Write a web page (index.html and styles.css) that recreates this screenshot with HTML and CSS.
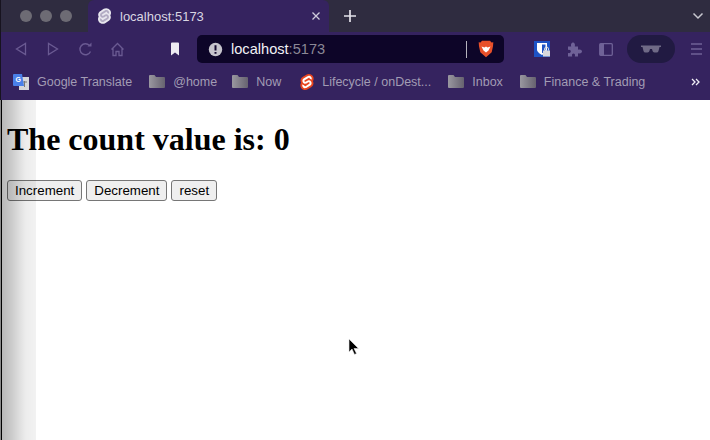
FILE: index.html
```html
<!DOCTYPE html>
<html lang="en">
<head>
  <meta charset="UTF-8" />
  <title>localhost:5173</title>
  <link rel="stylesheet" href="styles.css">
</head>
<body>
  <svg class="defs" width="0" height="0">
    <defs>
      <linearGradient id="folder-fill" x1="0" y1="0" x2="1" y2="0">
        <stop offset="0" stop-color="#9a98a0"/>
        <stop offset="1" stop-color="#66626f"/>
      </linearGradient>
      <path id="folder" d="M1 0h4.500l1.500 2h8q1 0 1 1v9q0 1-1 1H1q-1 0-1-1V1q0-1 1-1z" fill="url(#folder-fill)"/>
      <path id="svelte-base" d="M91.800 15.600C80.900-.1 59.200-4.700 43.600 5.200L16.100 22.800C8.600 27.500 3.400 35.200 1.900 43.900c-1.300 7.300-.2 14.800 3.300 21.300-2.400 3.600-4 7.600-4.700 11.800-1.600 8.900.5 18.100 5.700 25.400 11 15.700 32.600 20.300 48.200 10.400l27.500-17.500c7.500-4.700 12.700-12.400 14.200-21.100 1.300-7.300.2-14.800-3.300-21.300 2.400-3.600 4-7.600 4.700-11.800 1.700-9-.4-18.200-5.700-25.500"/>
      <path id="svelte-s" d="M40.900 103.900c-8.900 2.300-18.200-1.200-23.400-8.700-3.200-4.400-4.400-9.900-3.500-15.300.2-.9.4-1.700.6-2.600l.5-1.600 1.400 1c3.300 2.400 6.900 4.200 10.800 5.400l1 .3-.1 1c-.1 1.400.3 2.900 1.100 4.100 1.600 2.300 4.400 3.400 7.100 2.700.6-.2 1.200-.4 1.700-.7L65.500 72c1.400-.9 2.300-2.200 2.600-3.800.3-1.600-.1-3.300-1-4.600-1.600-2.300-4.400-3.300-7.100-2.600-.6.2-1.200.4-1.700.7l-10.500 6.700c-1.700 1.100-3.600 1.900-5.600 2.400-8.900 2.300-18.200-1.200-23.400-8.700-3.100-4.400-4.400-9.900-3.400-15.300.9-5.200 4.100-9.900 8.600-12.700l27.500-17.500c1.700-1.100 3.600-1.900 5.600-2.500 8.900-2.300 18.200 1.200 23.400 8.700 3.200 4.400 4.400 9.900 3.500 15.300-.2.900-.4 1.700-.7 2.600l-.5 1.600-1.400-1c-3.300-2.400-6.900-4.200-10.800-5.400l-1-.3.1-1c.1-1.400-.3-2.900-1.100-4.100-1.600-2.300-4.400-3.300-7.100-2.600-.6.2-1.200.4-1.700.7L32.400 46.100c-1.400.9-2.300 2.200-2.600 3.800s.1 3.300 1 4.600c1.600 2.300 4.400 3.300 7.100 2.600.6-.2 1.200-.4 1.700-.7l10.500-6.700c1.700-1.100 3.600-1.900 5.600-2.500 8.900-2.300 18.200 1.200 23.400 8.700 3.200 4.400 4.400 9.900 3.500 15.300-.9 5.200-4.100 9.900-8.600 12.700l-27.500 17.500c-1.700 1.100-3.600 1.900-5.600 2.500"/>
    </defs>
  </svg>

  <div class="browser">
    <div class="tabbar">
      <div class="lights"><span></span><span></span><span></span></div>
      <div class="tab">
        <svg width="13" height="16" viewBox="0 0 98 118"><use href="#svelte-base" fill="#e8e6ee"/><use href="#svelte-s" fill="#35235f" opacity=".3"/></svg>
        <span class="tab-title">localhost:5173</span>
        <svg class="tab-close" width="10" height="10" viewBox="0 0 10 10"><path d="M1.500 1.500l7 7M8.500 1.500l-7 7" stroke="#cfcbdc" stroke-width="1.300"/></svg>
      </div>
      <svg class="new-tab" width="14" height="14" viewBox="0 0 14 14"><path d="M7 1v12M1 7h12" stroke="#e4e2ea" stroke-width="1.700"/></svg>
      <svg class="tab-list" width="12" height="8" viewBox="0 0 12 8"><path d="M1.500 1.500L6 6l4.500-4.500" fill="none" stroke="#c8c8d0" stroke-width="1.500"/></svg>
    </div>

    <div class="toolbar">
      <svg class="nav-back" width="12" height="14" viewBox="0 0 12 14"><path d="M10.500 1.500v11L1.500 7z" fill="none" stroke="#6a5a92" stroke-width="1.300"/></svg>
      <svg class="nav-forward" width="12" height="14" viewBox="0 0 12 14"><path d="M1.500 1.500v11l9-5.500z" fill="none" stroke="#6a5a92" stroke-width="1.300"/></svg>
      <svg class="nav-reload" width="15" height="15" viewBox="0 0 15 15"><path d="M12.500 9.500A5.500 5.500 0 1 1 11.500 3.500" fill="none" stroke="#6a5a92" stroke-width="1.400"/><path d="M9.500 4.500h4v-4z" fill="#6a5a92"/></svg>
      <svg class="nav-home" width="15" height="15" viewBox="0 0 15 15"><path d="M1.500 7.500L7.500 1.500l6 6M3 6.500v7h3V9.500h3v4h3v-7" fill="none" stroke="#6a5a92" stroke-width="1.300"/></svg>
      <svg class="bookmark" width="10" height="14" viewBox="0 0 10 14"><path d="M1 1.500q0-1 1-1h6q1 0 1 1V13.500L5 10.500 1 13.500z" fill="#eeecf2"/></svg>
      <div class="urlbar">
        <svg width="15" height="15" viewBox="0 0 15 15"><circle cx="7.500" cy="7.500" r="6.700" fill="#c6c4cc"/><path d="M7.500 3.200v5.200M7.500 10v1.800" stroke="#14092e" stroke-width="2"/></svg>
        <span class="url"><b>localhost</b>:5173</span>
        <i class="url-sep"></i>
        <svg class="brave" width="16" height="18" viewBox="0 0 16 18"><path d="M4 .8h8l1.500 1.700 1.800-.2-.3 4-1.300 6L8 17.200 2.300 12.300 1 6.300.7 2.300l1.800.2z" fill="#e8502a"/><path d="M3.500 6.500L6.500 7.500 8 6.500l1.500 1 3-1-2 4L8 12.500 5.500 10.500z" fill="#fff"/></svg>
      </div>
      <svg class="bitwarden" width="16" height="16" viewBox="0 0 16 16"><rect width="16" height="16" fill="#1d53c4"/><path d="M3 2h10v6.500c0 2.500-3 4.500-5 5.500-2-1-5-3-5-5.500z" fill="#fff"/><path d="M8 3.500h3.500v5c0 1.500-2 3-3.500 3.800z" fill="#1d53c4"/><rect x="9" y="9.500" width="7" height="6" fill="#d8d8dc"/><path d="M10.500 9.500v-1.500a2 2 0 0 1 4 0v1.500" fill="none" stroke="#d8d8dc"/></svg>
      <svg class="puzzle" width="15" height="15" viewBox="0 0 15 15"><path d="M1 4.500h3.200C3.500 1.500 5 .5 6 .5s2.500 1 1.800 4H11v3.300c3-.7 4 .8 4 1.700s-1 2.500-4 1.800V14.500H7.800c.7-2.200-.3-3-1.300-3s-2 .8-1.300 3H1V11c2 .5 2.800-.5 2.800-1.500S3 7.500 1 8z" fill="#6f6297"/></svg>
      <svg class="sidebar" width="14" height="13" viewBox="0 0 14 13"><rect x=".7" y=".7" width="12.600" height="11.600" rx="1" fill="none" stroke="#6f6297" stroke-width="1.300"/><rect x="1" y="1" width="4" height="11" fill="#6f6297"/></svg>
      <div class="private">
        <svg width="20" height="8" viewBox="0 0 20 8"><path d="M0 .5h20v1.500l-1.500 0-1 4q-.3 1.500-2 1.500h-2q-1.800 0-2.500-3.500h-2Q8.300 7.500 6.500 7.500h-2q-1.700 0-2-1.500l-1-4L0 2z" fill="#6f6a86"/></svg>
      </div>
      <svg class="menu" width="11" height="12" viewBox="0 0 11 12"><path d="M0 1h11M0 6h11M0 11h11" stroke="#6f6297" stroke-width="1.300"/></svg>
    </div>

    <div class="bookmarks">
      <a class="mark">
        <svg width="16" height="16" viewBox="0 0 16 16"><rect x="6" y="3" width="10" height="13" fill="#d6d6d8"/><path d="M9 8h5M11.500 7v6" stroke="#777"/><path d="M1 0h8l2 12H1q-1 0-1-1V1q0-1 1-1z" fill="#4a80e8"/><text x="2.500" y="8" class="g-glyph">G</text></svg>
        Google Translate
      </a>
      <a class="mark mark-home"><svg width="16" height="13" viewBox="0 0 16 13"><use href="#folder"/></svg>@home</a>
      <a class="mark mark-now"><svg width="16" height="13" viewBox="0 0 16 13"><use href="#folder"/></svg>Now</a>
      <a class="mark">
        <svg width="14" height="16" viewBox="0 0 98 118"><use href="#svelte-base" fill="#e8451f"/><use href="#svelte-s" fill="#fff"/></svg>
        Lifecycle / onDest...
      </a>
      <a class="mark"><svg width="16" height="13" viewBox="0 0 16 13"><use href="#folder"/></svg>Inbox</a>
      <a class="mark"><svg width="16" height="13" viewBox="0 0 16 13"><use href="#folder"/></svg>Finance &amp; Trading</a>
      <svg class="more" width="9" height="8" viewBox="0 0 9 8"><path d="M1 1l3 3-3 3M5 1l3 3-3 3" fill="none" stroke="#f0eef6" stroke-width="1.300"/></svg>
    </div>
  </div>

  <div class="page">
    <h1>The count value is: 0</h1>
    <div class="actions">
      <button>Increment</button>
      <button>Decrement</button>
      <button>reset</button>
    </div>
    <svg class="cursor" width="11" height="18" viewBox="0 0 11 18"><path d="M1 1v13l3-3 2.500 5.500 2-1L6 10.500h4.500z" fill="#000" stroke="#e8e8e8" stroke-width=".6"/></svg>
  </div>
</body>
</html>
```

FILE: styles.css
```css
html, body {
  margin: 0;
  height: 100%;
  overflow: hidden;
}

body {
  font-family: "Liberation Sans", Arial, sans-serif;
  background: #fff;
  display: flex;
  flex-direction: column;
}

.defs {
  position: absolute;
}

.browser {
  height: 100px;
  flex: none;
  background: #35235f;
  border-left: 1px solid #17131f;
  box-sizing: border-box;
}

/* tab strip */
.tabbar {
  height: 32px;
  background: #2f2c40;
  display: flex;
  align-items: center;
}

.lights {
  display: flex;
  gap: 8px;
  width: 87px;
  padding-left: 19px;
  box-sizing: border-box;
}

.lights span {
  width: 12px;
  height: 12px;
  border-radius: 50%;
  background: #6d6b74;
}

.tab {
  width: 241px;
  height: 32px;
  box-sizing: border-box;
  padding-left: 10px;
  background: #35235f;
  border-radius: 6px 6px 0 0;
  display: flex;
  align-items: center;
  font-size: 13px;
  color: #d9d6e2;
}

.tab-title {
  margin-left: 9px;
  flex: 1;
}

.tab-close {
  margin-right: 8px;
}

.new-tab {
  margin-left: 14px;
}

.tab-list {
  margin-left: auto;
  margin-right: 6px;
}

/* nav row */
.toolbar {
  height: 34px;
  display: flex;
  align-items: center;
}

.nav-back { margin-left: 14px; }
.nav-forward { margin-left: 20px; }
.nav-reload { margin-left: 19px; }
.nav-home { margin-left: 17px; }
.bookmark { margin-left: 45px; }

.urlbar {
  width: 307px;
  height: 28px;
  margin-left: 17px;
  padding: 0 10px 0 11px;
  box-sizing: border-box;
  background: #0d0528;
  border-radius: 5px;
  display: flex;
  align-items: center;
  font-size: 14.6px;
  color: #8b8896;
}

.url {
  margin-left: 8px;
  flex: 1;
}

.url b {
  font-weight: normal;
  color: #f2f1f5;
}

.url-sep {
  width: 1px;
  height: 17px;
  background: #b5b3bd;
  margin-right: 11px;
}

.bitwarden { margin-left: 30px; }
.puzzle { margin-left: 17px; }
.sidebar { margin-left: 17px; }

.private {
  width: 48px;
  height: 28px;
  margin-left: 14px;
  border-radius: 14px;
  background: #211a42;
  display: flex;
  align-items: center;
  justify-content: center;
}

.menu { margin-left: 16px; }

/* bookmarks row */
.bookmarks {
  height: 34px;
  display: flex;
  align-items: center;
  font-size: 12.5px;
  color: #a29cb4;
  padding-left: 12px;
  padding-bottom: 3px;
  box-sizing: border-box;
}

.mark {
  display: flex;
  align-items: center;
  gap: 8px;
  margin-right: 17px;
  white-space: nowrap;
}

.mark-home { margin-right: 15px; }
.mark-now { margin-right: 19px; }

.g-glyph {
  font-size: 7px;
  font-weight: bold;
  fill: #fff;
}

.more {
  margin-left: auto;
  margin-right: 10px;
}

/* page content */
.page {
  flex: 1;
  position: relative;
  padding: 21px 7px 0;
}

/* shadow strip left over from the window behind, falls across the buttons too */
.page::after {
  content: "";
  position: absolute;
  left: 0;
  top: 0;
  bottom: 0;
  width: 36px;
  pointer-events: none;
  background:
    linear-gradient(to right, rgba(0, 0, 0, 0.25) 0 1px, #000 1px 2px, transparent 2px),
    linear-gradient(to right, rgba(0, 0, 0, 0.28) 2px, rgba(0, 0, 0, 0.2) 12px, rgba(0, 0, 0, 0.12) 20px, rgba(0, 0, 0, 0.07) 26px, rgba(0, 0, 0, 0.05) 36px);
}

h1 {
  margin: 0 0 22px;
  font-family: "Liberation Serif", "Times New Roman", serif;
  font-size: 32px;
  line-height: 37px;
  color: #000;
}

.actions {
  display: flex;
  gap: 4px;
}

button {
  height: 21px;
  padding: 0 7px;
  font-family: "Liberation Sans", Arial, sans-serif;
  font-size: 13.33px;
  color: #000;
  background: #efefef;
  border: 1px solid #767676;
  border-radius: 3px;
}

.cursor {
  position: absolute;
  left: 348px;
  top: 238px;
}
```
